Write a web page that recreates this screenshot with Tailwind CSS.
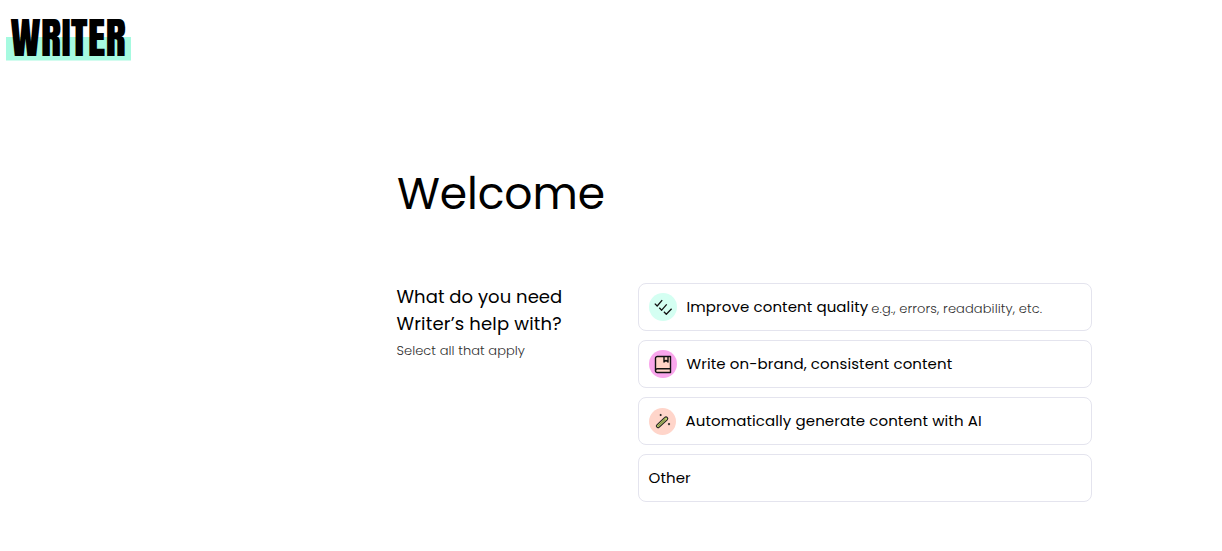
<!DOCTYPE html>
<html lang="en">
<head>
    <meta charset="UTF-8">
    <meta name="viewport" content="width=device-width, initial-scale=1.0">
    <title>Writer - Welcome</title>
    <script src="https://cdn.jsdelivr.net/npm/@tailwindcss/browser@4"></script>
</head>
<body class="min-h-screen bg-white text-black font-[Poppins,Inter,sans-serif]">
    <header class="h-[150px] pl-[6px]">
        <svg class="w-[125px] h-[70px] overflow-visible" viewBox="0 -10 125 70" role="img" aria-label="Writer">
            <rect x="0" y="27" width="125" height="23.5" fill="#a6fae0"/>
            <text x="4.3" y="45.6" font-family="Anton, Inter, sans-serif" font-weight="400" font-size="42.5" textLength="115.5" lengthAdjust="spacingAndGlyphs">WRITER</text>
        </svg>
    </header>

    <main class="ml-[397px] w-[695px]">
        <h1 class="h-[88px] leading-[88px] text-[44px] tracking-[-0.1px] font-normal whitespace-nowrap">Welcome</h1>

        <div class="mt-[45px] flex justify-between">
            <div class="w-[200px]">
                <h2 class="-ml-[0.5px] text-lg leading-[27px] tracking-[0.04px] whitespace-nowrap">What do you need<br><span class="tracking-[0.17px]">Writer’s help with?</span></h2>
                <p class="-ml-[0.5px] mt-1 text-[13px] leading-5 tracking-[0.06px] font-light text-[#303030] whitespace-nowrap">Select all that apply</p>
            </div>

            <div class="w-[454px] flex flex-col gap-[9px] text-[15px] tracking-[0.1px] whitespace-nowrap">
                <button type="button" class="h-12 flex items-center rounded-lg border border-[#e4e4ee] px-[10px]">
                    <span class="size-7 mr-[9.5px] flex items-center justify-center rounded-full bg-[#d4fff2]">
                        <svg class="size-7" viewBox="0 0 28 28" fill="none" stroke="#111" stroke-width="1.3" stroke-linejoin="round">
                            <path d="M5.8 10.6l2.4 2.4 5-5.8M10.3 14.8l2.4 2.4 5-5.8M14.9 18.8l2.4 2.4 5.3-5.4"/>
                        </svg>
                    </span>
                    <span>Improve content quality</span>
                    <span class="ml-[3px] mt-[3px] text-[13px] tracking-[0.1px] font-light text-[#303030]">e.g., errors, readability, etc.</span>
                </button>
                <button type="button" class="h-12 flex items-center rounded-lg border border-[#e4e4ee] px-[10px]">
                    <span class="size-7 mr-[9.5px] flex items-center justify-center rounded-full bg-[#f9a6ec]">
                        <svg class="size-7" viewBox="0 0 28 28" fill="none" stroke="#111" stroke-width="1.4" stroke-linejoin="round">
                            <path fill="#ffd3c6" d="M8.5 6.5h13v16H8.3a1.8 1.8 0 0 1-1.8-1.8V8.3a1.8 1.8 0 0 1 2-1.8z"/>
                            <path d="M6.5 20.5a1.8 1.8 0 0 1 1.8-1.7h13.2M15 6.5v5.5l2-1.6 2 1.6v-5.5"/>
                        </svg>
                    </span>
                    <span>Write on-brand, consistent content</span>
                </button>
                <button type="button" class="h-12 flex items-center rounded-lg border border-[#e4e4ee] px-[10px]">
                    <span class="size-[27px] mr-[9.5px] flex items-center justify-center rounded-full bg-[#ffd5ca]">
                        <svg class="size-[27px]" viewBox="0 0 27 27" fill="none" stroke="#222" stroke-width="1.1">
                            <path fill="#c8d96f" d="M7.9 16.8l7.9-7.4a1.6 1.6 0 0 1 2.4 2.4l-7.9 7.4a1.6 1.6 0 0 1-2.4-2.4z"/>
                            <path stroke-width="0.6" d="M9.3 17.9l7-6.6"/>
                            <path fill="#222" stroke="none" d="M11.7 5.7l1.3 1.3-1.3 1.3-1.3-1.3zM20 14.8l1.3 1.3-1.3 1.3-1.3-1.3z"/>
                        </svg>
                    </span>
                    <span>Automatically generate content with AI</span>
                </button>
                <button type="button" class="h-12 flex items-center rounded-lg border border-[#e4e4ee] px-[9.5px]">
                    <span>Other</span>
                </button>
            </div>
        </div>
    </main>
</body>
</html>
